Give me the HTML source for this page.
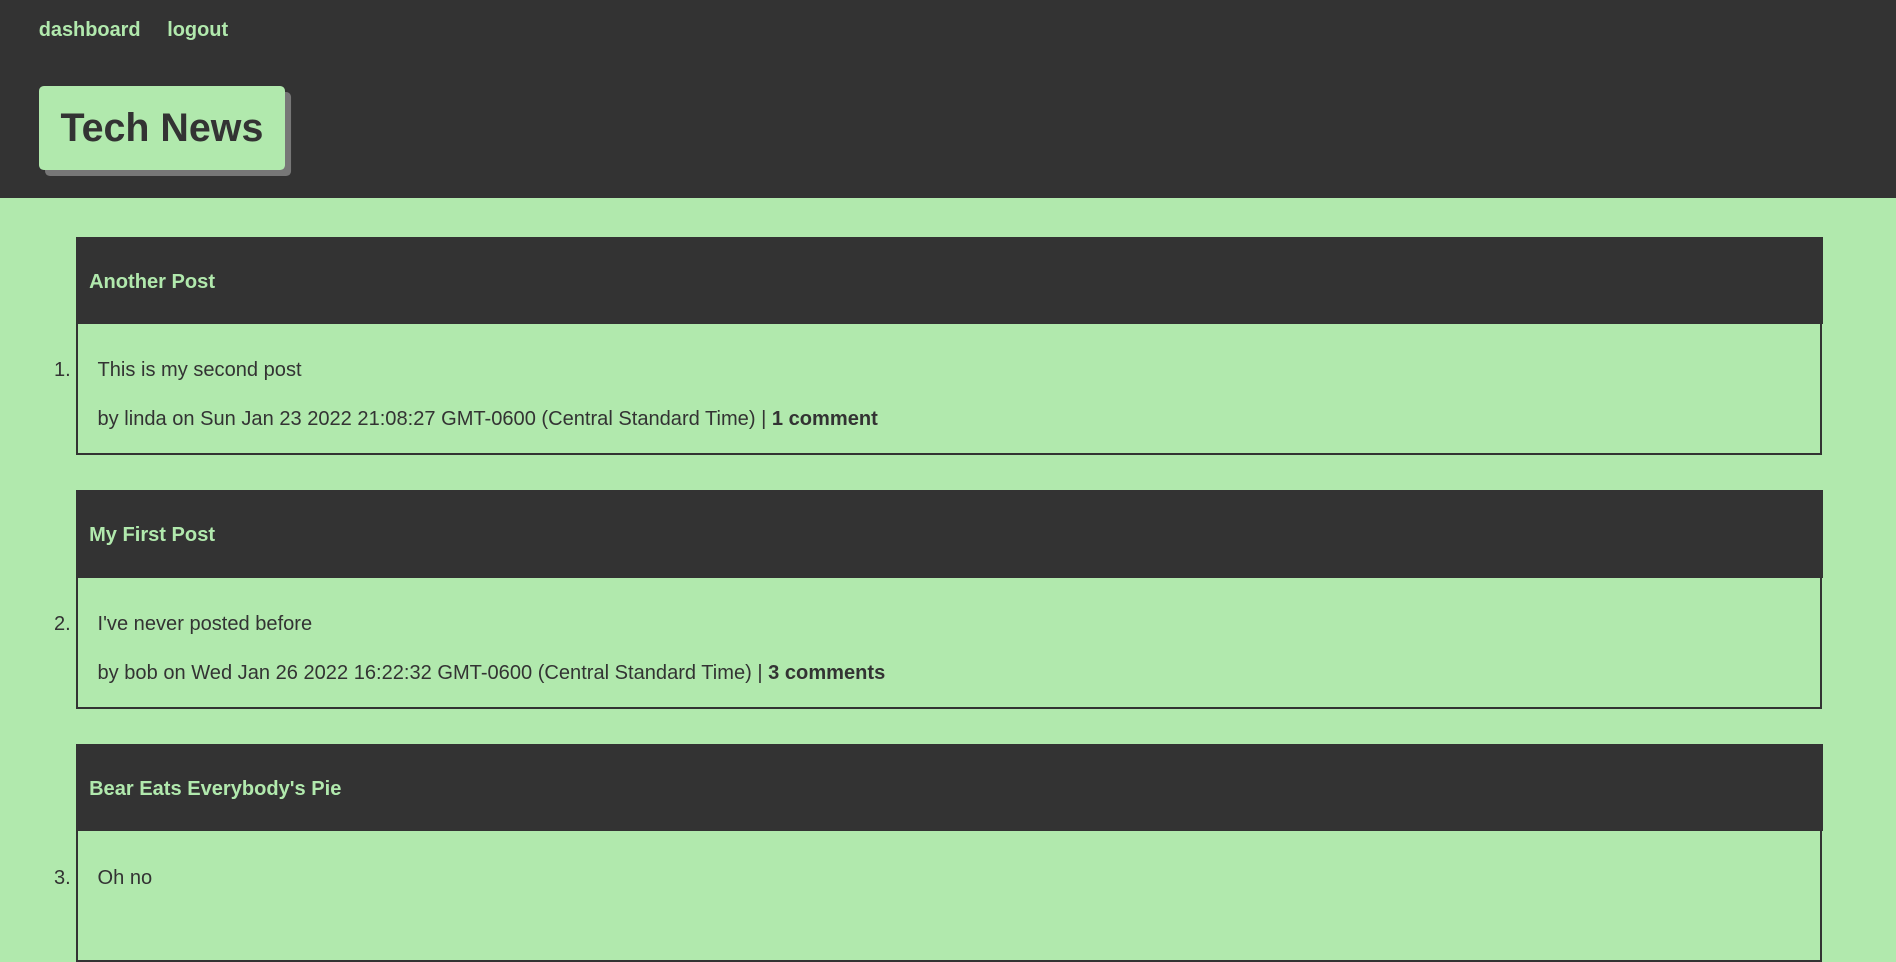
<!DOCTYPE html>
<html><head><meta charset="utf-8"><style>
html,body{margin:0;padding:0;}
body{background:#b1e9ad;font-family:"Liberation Sans",Arial,sans-serif;color:#333;width:1568px;height:739px;overflow:hidden;zoom:1.2092;}
header{background:#333;height:164px;position:relative;}
nav{position:absolute;left:32px;top:16px;font-weight:bold;font-size:16.5px;}
nav a{color:#b1e9ad;text-decoration:none;margin-right:18px;}
nav a+a{margin-left:4px;}
.logo{position:absolute;left:32px;top:71px;width:204px;height:70px;background:#b1e9ad;border-radius:4px;box-shadow:5px 5px 0 #777;box-sizing:border-box;padding-left:18px;line-height:70px;font-size:32.6px;font-weight:bold;color:#333;}
.list{padding:32px 0 0 63px;width:1444px;font-size:16.6px;}
.li{border:2px solid #333;margin-bottom:30px;box-sizing:border-box;position:relative;height:180px;}
.n{position:absolute;left:-20px;top:99px;line-height:19px;}
.t{background:#333;height:72px;margin:-2px -2px 0 -2px;color:#b1e9ad;font-weight:bold;padding-left:11px;line-height:76px;font-size:16.6px;}
.b{padding:29px 0 0 16px;}
.b p{margin:0 0 22px 0;line-height:19px;}
</style></head><body>
<header>
<nav><a>dashboard</a><a>logout</a></nav>
<div class="logo">Tech News</div>
</header>
<div class="list">
<div class="li"><span class="n">1.</span><div class="t">Another Post</div><div class="b"><p>This is my second post</p><p>by linda on Sun Jan 23 2022 21:08:27 GMT-0600 (Central Standard Time) | <b>1 comment</b></p></div></div>
<div class="li"><span class="n">2.</span><div class="t">My First Post</div><div class="b"><p>I've never posted before</p><p>by bob on Wed Jan 26 2022 16:22:32 GMT-0600 (Central Standard Time) | <b>3 comments</b></p></div></div>
<div class="li"><span class="n">3.</span><div class="t">Bear Eats Everybody's Pie</div><div class="b"><p>Oh no</p><p>&nbsp;</p></div></div>
</div>
</body></html>
